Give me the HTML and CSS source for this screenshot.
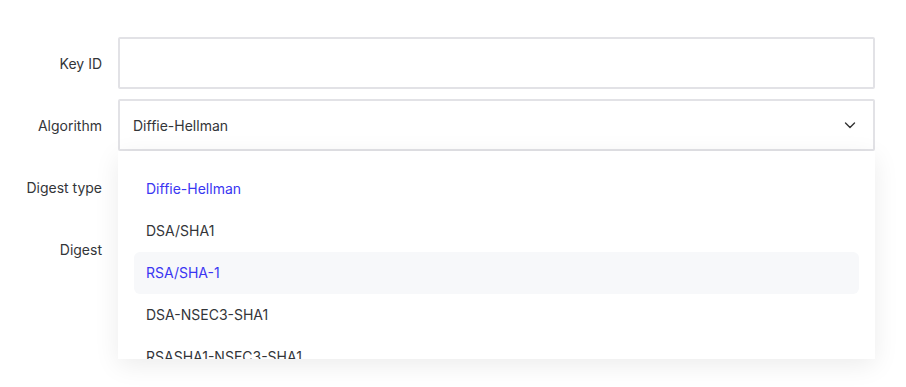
FILE: index.html
```html
<!DOCTYPE html>
<html lang="en">
<head>
    <meta charset="UTF-8">
    <title>DS record</title>
    <link rel="stylesheet" href="styles.css">
</head>
<body>
    <form class="ds-form">
        <div class="row">
            <label class="label" for="keyid">Key ID</label>
            <input class="field" type="text" id="keyid">
        </div>
        <div class="row">
            <label class="label">Algorithm</label>
            <div class="select-wrap">
                <div class="field select">
                    <span>Diffie-Hellman</span>
                    <svg class="chevron" width="14" height="14" viewBox="0 0 14 14"><path d="M2.5 5l4.5 4.5L11.5 5" fill="none" stroke="#333" stroke-width="1.4" stroke-linecap="round" stroke-linejoin="round"/></svg>
                </div>
                <ul class="dropdown">
                    <li class="option selected">Diffie-Hellman</li>
                    <li class="option">DSA/SHA1</li>
                    <li class="option hover">RSA/SHA-1</li>
                    <li class="option">DSA-NSEC3-SHA1</li>
                    <li class="option">RSASHA1-NSEC3-SHA1</li>
                </ul>
            </div>
        </div>
        <div class="row">
            <label class="label">Digest type</label>
            <div class="field"></div>
        </div>
        <div class="row">
            <label class="label" for="digest">Digest</label>
            <input class="field" type="text" id="digest">
        </div>
    </form>
</body>
</html>
```

FILE: styles.css
```css
* {
    box-sizing: border-box;
    margin: 0;
    padding: 0;
    font-family: Inter, 'Noto Sans', sans-serif;
}

html, body {
    height: 100%;
}

body {
    background-color: #fff;
    color: #333539;
    font-size: 14px;
    overflow: hidden;
}

.ds-form {
    padding: 37px 31px 0 0;
    display: flex;
    flex-direction: column;
    gap: 10px;
}

.row {
    display: grid;
    grid-template-columns: 102px 1fr;
    column-gap: 16px;
    align-items: center;
}

.label {
    text-align: right;
    font-size: 14px;
    color: #333539;
}

.field {
    display: block;
    width: 100%;
    height: 52px;
    border: 2px solid #e2e2e6;
    border-radius: 2px;
    background-color: #fff;
    font-size: 14px;
    padding: 0 13px;
    outline: none;
}

.select-wrap {
    position: relative;
}

.select {
    display: flex;
    align-items: center;
    justify-content: space-between;
    color: #333539;
}

.chevron {
    margin-right: 3px;
}

.dropdown {
    position: absolute;
    top: 100%;
    left: 0;
    right: 0;
    height: 208px;
    overflow: hidden;
    list-style: none;
    background-color: #fff;
    padding: 17px 16px 0 16px;
    box-shadow: 0 6px 24px rgba(0, 0, 0, 0.08);
    z-index: 2;
}

.option {
    height: 42px;
    line-height: 42px;
    padding: 0 12px;
    border-radius: 6px;
    color: #333539;
    font-size: 14px;
}

.option.selected {
    color: #3a36f2;
}

.option.hover {
    background-color: #f7f8fa;
    color: #3a36f2;
}
```
